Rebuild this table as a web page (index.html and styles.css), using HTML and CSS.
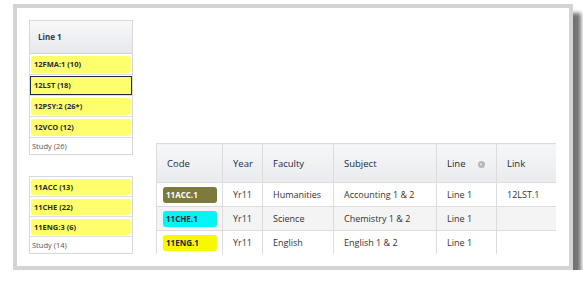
FILE: index.html
```html
<!DOCTYPE html>
<html>
<head>
    <title>Timetable Lines</title>
    <link rel="stylesheet" href="styles.css">
</head>
<body>
    <div class="frame">
        <div class="content">
            <div class="lines">
                <div class="panel">
                    <div class="panel-head">Line 1</div>
                    <div class="slot"><div class="chip">12FMA:1 (10)</div></div>
                    <div class="slot"><div class="chip selected">12LST (18)</div></div>
                    <div class="slot"><div class="chip">12PSY:2 (26*)</div></div>
                    <div class="slot"><div class="chip">12VCO (12)</div></div>
                    <div class="study">Study (26)</div>
                </div>
                <div class="panel compact">
                    <div class="slot"><div class="chip">11ACC (13)</div></div>
                    <div class="slot"><div class="chip">11CHE (22)</div></div>
                    <div class="slot"><div class="chip">11ENG:3 (6)</div></div>
                    <div class="study">Study (14)</div>
                </div>
            </div>

            <table class="classes">
                <colgroup>
                    <col class="col-code">
                    <col class="col-year">
                    <col class="col-faculty">
                    <col class="col-subject">
                    <col class="col-line">
                    <col class="col-link">
                </colgroup>
                <thead>
                    <tr>
                        <th>Code</th>
                        <th>Year</th>
                        <th>Faculty</th>
                        <th>Subject</th>
                        <th>Line <span class="sort"></span></th>
                        <th>Link</th>
                    </tr>
                </thead>
                <tbody>
                    <tr>
                        <td><span class="badge olive">11ACC.1</span></td>
                        <td>Yr11</td>
                        <td>Humanities</td>
                        <td>Accounting 1 &amp; 2</td>
                        <td>Line 1</td>
                        <td>12LST.1</td>
                    </tr>
                    <tr class="alt">
                        <td><span class="badge cyan">11CHE.1</span></td>
                        <td>Yr11</td>
                        <td>Science</td>
                        <td>Chemistry 1 &amp; 2</td>
                        <td>Line 1</td>
                        <td></td>
                    </tr>
                    <tr>
                        <td><span class="badge yellow">11ENG.1</span></td>
                        <td>Yr11</td>
                        <td>English</td>
                        <td>English 1 &amp; 2</td>
                        <td>Line 1</td>
                        <td></td>
                    </tr>
                </tbody>
            </table>
        </div>
    </div>
</body>
</html>
```

FILE: styles.css
```css
body {
    margin: 0;
    padding: 0;
    background-color: #fff;
    font-family: "Open Sans", Arial, sans-serif;
    color: #333;
}

.frame {
    margin: 4px 0 0 13px;
    width: 552px;
    height: 258px;
    border: 4px solid #d4d4d4;
    background-color: #fff;
    box-shadow: 8px 9px 4px rgba(0, 0, 0, 0.55);
}

.content {
    display: flex;
    align-items: flex-start;
    gap: 23px;
    height: 234px;
    margin: 12px 13px 0 12px;
    overflow: hidden;
}

/* line columns on the left */
.lines {
    display: flex;
    flex-direction: column;
    gap: 21px;
    width: 104px;
    flex-shrink: 0;
}

.panel {
    border: 1px solid #d8d8d8;
    border-bottom: none;
}

.panel-head {
    height: 32px;
    line-height: 32px;
    padding-left: 8px;
    font-size: 8px;
    font-weight: bold;
    color: #2e3a52;
    background: linear-gradient(#f8f9fa, #e6e8ec);
    border-bottom: 1px solid #cfd2d8;
}

.slot {
    padding: 2px 1px 1px;
    border-bottom: 1px solid #dedede;
}

.chip {
    height: 17px;
    line-height: 17px;
    padding-left: 3px;
    font-size: 7.5px;
    font-weight: bold;
    color: #2a2a2a;
    background-color: #ffff6e;
    border-radius: 3px;
}

.chip.selected {
    margin: -1px -1px;
    height: 17px;
    line-height: 17px;
    padding-left: 3px;
    border: 1px solid #1e2c4c;
    border-radius: 0;
}

.compact .chip {
    height: 16px;
    line-height: 16px;
}

.study {
    height: 16px;
    line-height: 16px;
    padding-left: 2px;
    font-size: 7.5px;
    color: #555;
    border-bottom: 1px solid #d8d8d8;
}

/* classes table */
.classes {
    margin-top: 123px;
    width: 400px;
    flex-shrink: 0;
    border-collapse: collapse;
    table-layout: fixed;
    font-size: 9px;
}

.col-code { width: 66px; }
.col-year { width: 40px; }
.col-faculty { width: 71px; }
.col-subject { width: 103px; }
.col-line { width: 60px; }
.col-link { width: 60px; }

.classes th,
.classes td {
    border: 1px solid #dcdcdc;
    padding: 0 10px;
    text-align: left;
    white-space: nowrap;
    overflow: hidden;
}

.classes th {
    height: 38px;
    font-weight: normal;
    font-size: 9.5px;
    color: #1d2a48;
    background: linear-gradient(#f6f7f8, #e9ebee);
}

.classes td {
    height: 23px;
}

.classes tr.alt td {
    background-color: #f4f4f4;
}

.classes td:first-child {
    padding: 0 5px 0 6px;
}

.sort {
    display: inline-block;
    width: 7px;
    height: 7px;
    margin-left: 10px;
    border-radius: 50%;
    background-color: #b5b8bc;
    vertical-align: -1px;
    position: relative;
}

.sort::after {
    content: "";
    position: absolute;
    left: 2px;
    top: 2px;
    border-left: 1.5px solid transparent;
    border-right: 1.5px solid transparent;
    border-bottom: 2px solid #fff;
}

.badge {
    display: block;
    height: 16px;
    line-height: 16px;
    padding-left: 3px;
    font-size: 8px;
    font-weight: bold;
    border-radius: 3px;
}

.badge.olive {
    background-color: #7d7a3e;
    color: #fff;
}

.badge.cyan {
    background-color: #00f5f5;
    color: #1b2540;
}

.badge.yellow {
    background-color: #f8f800;
    color: #1b2540;
}
```
